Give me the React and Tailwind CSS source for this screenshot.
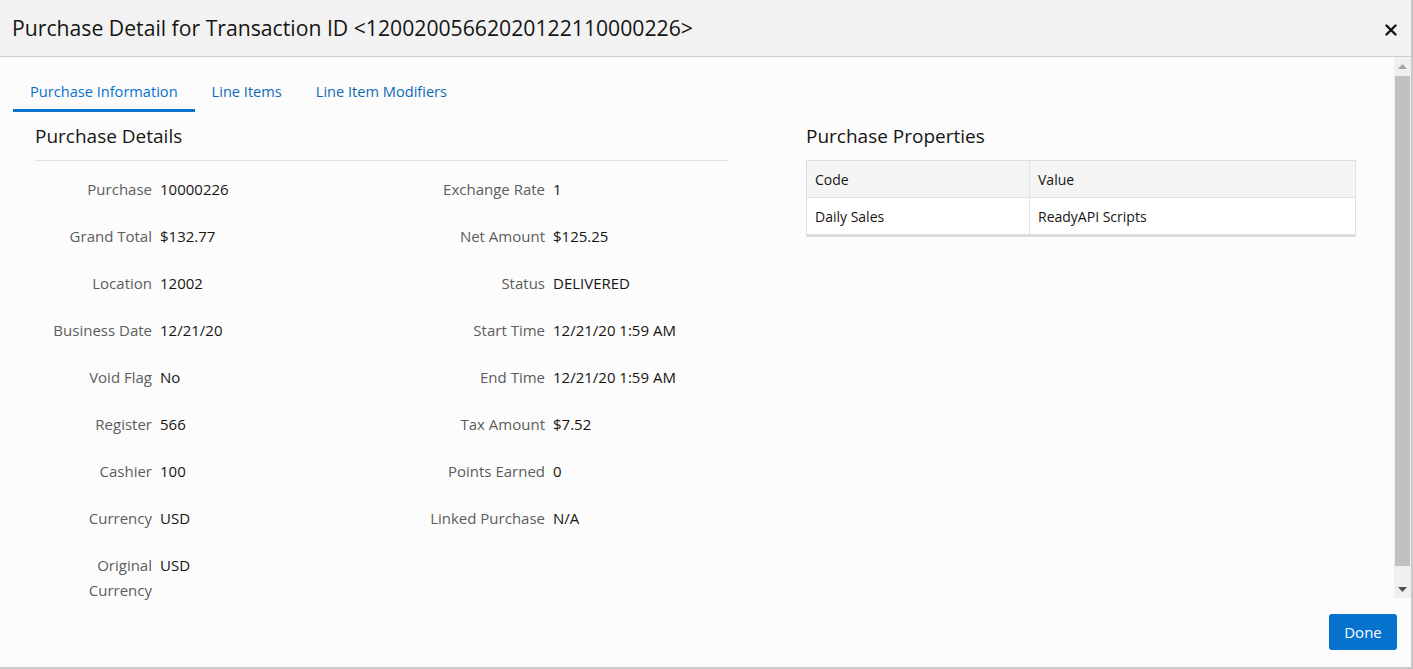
import React from "react";

const left = [
  ["Purchase", "10000226"],
  ["Grand Total", "$132.77"],
  ["Location", "12002"],
  ["Business Date", "12/21/20"],
  ["Void Flag", "No"],
  ["Register", "566"],
  ["Cashier", "100"],
  ["Currency", "USD"],
  ["Original Currency", "USD"],
];
const right = [
  ["Exchange Rate", "1"],
  ["Net Amount", "$125.25"],
  ["Status", "DELIVERED"],
  ["Start Time", "12/21/20 1:59 AM"],
  ["End Time", "12/21/20 1:59 AM"],
  ["Tax Amount", "$7.52"],
  ["Points Earned", "0"],
  ["Linked Purchase", "N/A"],
];

function Field({ label, value }) {
  return (
    <div className="flex h-[47px] items-start text-[15px] leading-[25px]">
      <div className="w-[117px] shrink-0 text-right text-[#5c5c5c]">{label}</div>
      <div className="ml-2 text-[#161513]">{value}</div>
    </div>
  );
}

export default function App() {
  return (
    <div
      className="w-[1413px] h-[669px] flex flex-col bg-[#fcfcfc] border-r-2 border-b-2 border-[#c8c8c8] overflow-hidden"
      style={{ fontFamily: '"Open Sans", "Noto Sans", sans-serif' }}
    >
      <div className="h-[57px] shrink-0 flex items-center justify-between bg-[#f2f2f2] border-b border-[#cdcdcd] pl-3 pr-[14px]">
        <div className="text-[21.2px] text-[#161513]">
          Purchase Detail for Transaction ID &lt;12002005662020122110000226&gt;
        </div>
        <svg width="12" height="12" viewBox="0 0 12 12" className="mt-1">
          <path d="M1.5 1.5 L10.5 10.5 M10.5 1.5 L1.5 10.5" stroke="#161513" strokeWidth="2.4" strokeLinecap="round" />
        </svg>
      </div>
      <div className="flex h-[541px] shrink-0">
        <div className="flex-1 flex flex-col">
          <div className="flex pl-[13px] pt-[18px]">
            <div className="px-[17px] h-[37px] flex items-center border-b-[3px] border-[#0572ce] text-[14.6px] text-[#0572ce]">
              Purchase Information
            </div>
            <div className="px-[17px] h-[37px] flex items-center border-b-[3px] border-transparent text-[14.6px] text-[#0f6ab4]">
              Line Items
            </div>
            <div className="px-[17px] h-[37px] flex items-center border-b-[3px] border-transparent text-[14.6px] text-[#0f6ab4]">
              Line Item Modifiers
            </div>
          </div>
          <div className="flex pl-[35px] pt-[11px] gap-[77px]">
            <div className="w-[694px]">
              <div className="text-[19px] leading-[26px] text-[#161513] pb-[11px] border-b border-[#e2e2e2]">
                Purchase Details
              </div>
              <div className="flex pt-[16px]">
                <div className="w-[393px]">
                  {left.map(([l, v]) => (
                    <Field key={l} label={l} value={v} />
                  ))}
                </div>
                <div>
                  {right.map(([l, v]) => (
                    <Field key={l} label={l} value={v} />
                  ))}
                </div>
              </div>
            </div>
            <div className="w-[550px]">
              <div className="text-[19px] leading-[26px] text-[#161513] pb-[11px]">Purchase Properties</div>
              <div className="border border-[#e0e0e0] border-b-[3px] border-b-[#dcdcdc] text-[14px] text-[#161513]">
                <div className="flex h-[37px] bg-[#f5f5f5] border-b border-[#e2e2e2]">
                  <div className="w-[223px] px-2 flex items-center border-r border-[#e2e2e2]">Code</div>
                  <div className="flex-1 px-2 flex items-center">Value</div>
                </div>
                <div className="flex h-[36px] bg-white">
                  <div className="w-[223px] px-2 flex items-center border-r border-[#e2e2e2]">Daily Sales</div>
                  <div className="flex-1 px-2 flex items-center">ReadyAPI Scripts</div>
                </div>
              </div>
            </div>
          </div>
        </div>
        <div className="w-[17px] shrink-0 flex flex-col items-center bg-[#f0f0f0]">
          <div className="h-[19px] flex items-center justify-center">
            <svg width="9" height="5" viewBox="0 0 9 5"><path d="M0 5 L4.5 0 L9 5 Z" fill="#a3a3a3" /></svg>
          </div>
          <div className="w-[15px] flex-1 bg-[#c1c1c1] mb-[14px]" />
          <div className="h-[18px] flex items-center justify-center">
            <svg width="9" height="5" viewBox="0 0 9 5"><path d="M0 0 L9 0 L4.5 5 Z" fill="#505050" /></svg>
          </div>
        </div>
      </div>
      <div className="flex-1 flex justify-end items-start pt-[16px] pr-[14px]">
        <button className="w-[68px] h-[36px] rounded-[3px] bg-[#0572ce] text-white text-[15px]">Done</button>
      </div>
    </div>
  );
}
